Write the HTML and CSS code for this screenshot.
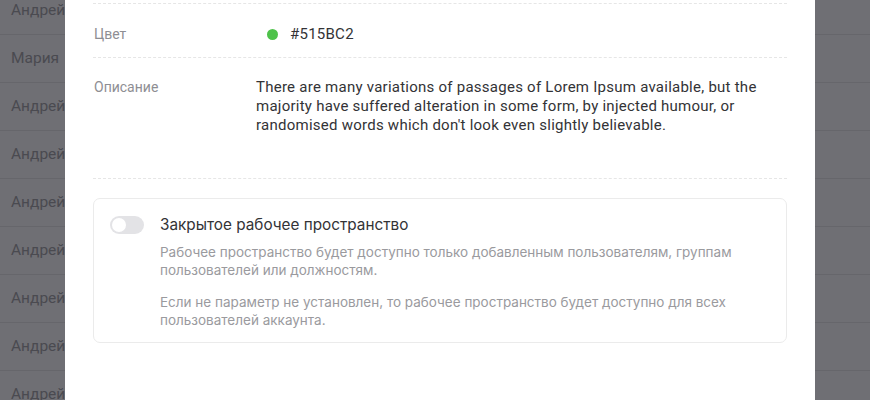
FILE: index.html
```html
<html>
    <head>
        <title>Рабочее пространство</title>
        <link rel="stylesheet" href="styles.css">
    </head>
    <body>
        <div class="list">
            <div class="row">Андрей</div>
            <div class="row">Мария</div>
            <div class="row">Андрей</div>
            <div class="row">Андрей</div>
            <div class="row">Андрей</div>
            <div class="row">Андрей</div>
            <div class="row">Андрей</div>
            <div class="row">Андрей</div>
            <div class="row">Андрей</div>
        </div>

        <div class="modal">
            <div class="field color">
                <div class="label">Цвет</div>
                <div class="value"><span class="dot"></span>#515BC2</div>
            </div>
            <div class="field desc">
                <div class="label">Описание</div>
                <div class="value text">There are many variations of passages of Lorem Ipsum available, but the majority have suffered alteration in some form, by injected humour, or randomised words which don't look even slightly believable.</div>
            </div>

            <div class="card">
                <div class="toggle"><div class="knob"></div></div>
                <div class="card-body">
                    <div class="card-title">Закрытое рабочее пространство</div>
                    <p>Рабочее пространство будет доступно только добавленным пользователям, группам пользователей или должностям.</p>
                    <p>Если не параметр не установлен, то рабочее пространство будет доступно для всех пользователей аккаунта.</p>
                </div>
            </div>
        </div>
    </body>
</html>
```

FILE: styles.css
```css
body {
    margin: 0;
    width: 870px;
    height: 400px;
    overflow: hidden;
    background: #6f6f74;
    font-family: Roboto, "Liberation Sans", sans-serif;
    position: relative;
}

.list {
    margin-top: -13px;
}

.row {
    height: 47px;
    border-bottom: 1px solid #66666b;
    padding-left: 11px;
    line-height: 47px;
    font-size: 15.5px;
    color: #4a4a50;
}

.modal {
    position: absolute;
    left: 65px;
    top: 0;
    width: 750px;
    height: 400px;
    box-sizing: border-box;
    background: #fff;
    padding: 3px 28px 0 28px;
}

.field {
    display: flex;
    border-top: 1px dashed #e6e6e6;
    font-size: 14px;
    line-height: 19px;
}

.field.color {
    padding: 21px 0 13px 0;
}

.field.desc {
    padding: 20px 0 43px 0;
    border-bottom: 1px dashed #e6e6e6;
}

.label {
    width: 162px;
    padding-left: 1px;
    color: #8e8e93;
}

.value {
    flex: 1;
    color: #333336;
    display: flex;
    align-items: center;
    font-size: 15px;
    letter-spacing: 0.25px;
}

.value.text {
    display: block;
    padding-right: 20px;
}

.dot {
    width: 11px;
    height: 11px;
    border-radius: 50%;
    background: #4ec24a;
    margin: 0 12px 0 11px;
}

.card {
    margin-top: 19px;
    border: 1px solid #ebebeb;
    border-radius: 7px;
    padding: 16px 16px 13px 16px;
    display: flex;
    gap: 16px;
}

.toggle {
    width: 34px;
    height: 18px;
    border-radius: 9px;
    background: #e3e3e6;
    margin-top: 1px;
    position: relative;
    flex-shrink: 0;
}

.knob {
    position: absolute;
    left: 2px;
    top: 2px;
    width: 14px;
    height: 14px;
    border-radius: 50%;
    background: #fff;
}

.card-body {
    font-family: Inter, "Noto Sans", sans-serif;
}

.card-title {
    font-size: 15.3px;
    line-height: 20px;
    color: #333336;
    margin-bottom: 8px;
}

.card-body p {
    margin: 0 0 14px 0;
    font-size: 13.5px;
    line-height: 18px;
    color: #9a9a9e;
}

.card-body p:last-child {
    margin-bottom: 0;
}
```
